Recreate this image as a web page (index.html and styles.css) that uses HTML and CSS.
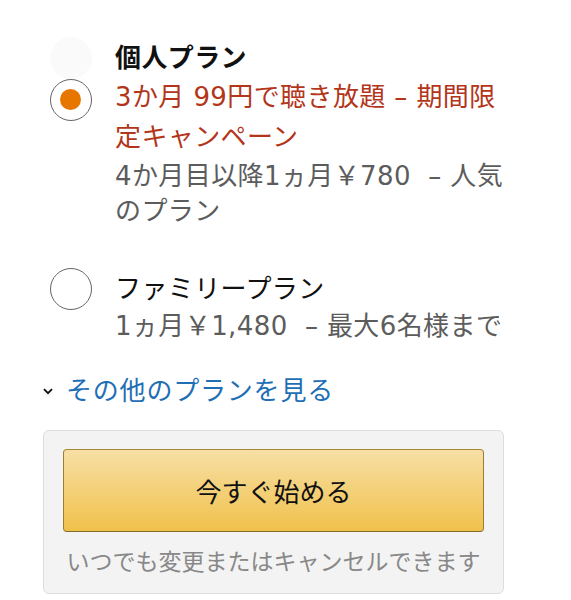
FILE: index.html
```html
<!DOCTYPE html>
<html lang="ja">
<head>
    <meta charset="UTF-8">
    <meta name="viewport" content="width=device-width, initial-scale=1.0">
    <title>プランを選択</title>
    <link rel="stylesheet" href="styles.css">
</head>
<body>

    <div class="container">

        <!-- Plan list -->
        <div class="plans">
            <div class="plan">
                <div class="radio-col">
                    <span class="radio-ghost"></span>
                    <span class="radio selected"></span>
                </div>
                <div class="plan-text">
                    <div class="plan-title">個人プラン</div>
                    <div class="plan-offer">3か月 99円で聴き放題 – 期間限定キャンペーン</div>
                    <div class="plan-note">4か月目以降1ヵ月￥780&nbsp; – 人気のプラン</div>
                </div>
            </div>

            <div class="plan">
                <div class="radio-col">
                    <span class="radio"></span>
                </div>
                <div class="plan-text">
                    <div class="plan-title normal">ファミリープラン</div>
                    <div class="plan-note">1ヵ月￥1,480&nbsp; – 最大6名様まで</div>
                </div>
            </div>
        </div>

        <!-- More plans link -->
        <a class="more-link" href="#">
            <svg class="chevron" width="10" height="7" viewBox="0 0 10 7">
                <path d="M1 1.2 L5 5.2 L9 1.2" fill="none" stroke="#111" stroke-width="1.9"/>
            </svg>
            <span>その他のプランを見る</span>
        </a>

        <!-- Start box -->
        <div class="start-box">
            <button class="start-button">今すぐ始める</button>
            <p class="start-note">いつでも変更またはキャンセルできます</p>
        </div>

    </div>

</body>
</html>
```

FILE: styles.css
```css
body {
    margin: 0;
    font-family: "Noto Sans CJK JP", "Noto Sans", sans-serif;
    background-color: #fff;
    color: #111;
}

.container {
    width: 461px;
    padding: 36px 0 0 43px;
}

.plans {
    display: flex;
    flex-direction: column;
    gap: 38px;
    margin-left: 7px;
}

.plan {
    display: flex;
    gap: 23px;
}

.radio-col {
    display: flex;
    flex-direction: column;
    width: 42px;
    flex-shrink: 0;
    padding-top: 1px;
}

.radio {
    display: block;
    box-sizing: border-box;
    width: 42px;
    height: 42px;
    border: 1.5px solid #666;
    border-radius: 50%;
    position: relative;
}

.radio.selected::after {
    content: "";
    position: absolute;
    left: 9px;
    top: 9px;
    width: 21px;
    height: 21px;
    border-radius: 50%;
    background-color: #e77600;
}

.radio-ghost {
    display: block;
    width: 42px;
    height: 42px;
    border-radius: 50%;
    background-color: #fafafa;
}

.plan-text {
    width: 395px;
    font-size: 26px;
    letter-spacing: 0.4px;
}

.plan-title {
    line-height: 40px;
    font-weight: bold;
    color: #111;
}

.plan-title.normal {
    font-weight: normal;
}

/* digits are wider in the original, so the Latin runs use DejaVu */
.plan-offer,
.plan-note {
    font-family: "DejaVu Sans", "Noto Sans CJK JP", sans-serif;
}

.plan-offer {
    line-height: 40px;
    margin-top: 1px;
    color: #b3361a;
}

.plan-note {
    line-height: 35px;
    color: #5c5c5c;
    margin-top: 2px;
}

.more-link {
    display: flex;
    align-items: center;
    gap: 13px;
    margin-top: 25px;
    line-height: 40px;
    font-size: 26px;
    letter-spacing: 0.8px;
    color: #1f6fb5;
    text-decoration: none;
}

.chevron {
    margin-top: 4px;
}

.start-box {
    box-sizing: border-box;
    width: 461px;
    margin-top: 21px;
    padding: 18px 19px 16px;
    background-color: #f3f3f3;
    border: 1px solid #ddd;
    border-radius: 6px;
}

.start-button {
    display: block;
    width: 100%;
    height: 83px;
    font-family: inherit;
    font-size: 26px;
    color: #111;
    background: linear-gradient(to bottom, #f7dfa5, #f0c14b);
    border: 1px solid #a88734;
    border-color: #a88734 #9c7e31 #846a29;
    border-radius: 4px;
    cursor: pointer;
}

.start-note {
    margin: 11px 0 0;
    line-height: 34px;
    font-size: 23px;
    color: #888;
    text-align: center;
}
```
